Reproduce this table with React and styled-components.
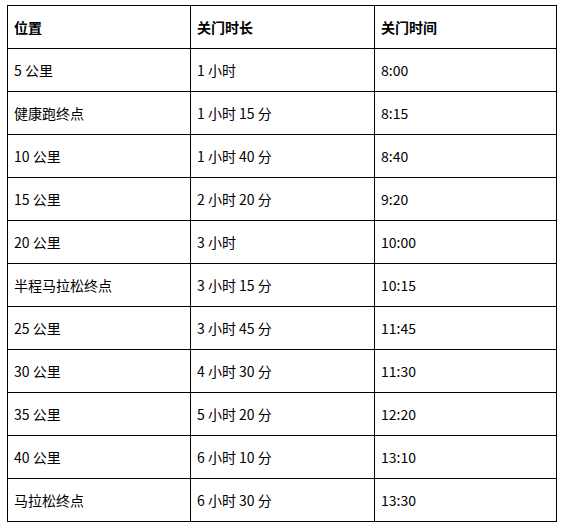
import React from "react";
import styled, { createGlobalStyle } from "styled-components";

const Global = createGlobalStyle`
  html, body { margin: 0; padding: 0; background: #fff; }
  body { font-family: "Noto Sans CJK SC", "Noto Sans", sans-serif; color: #000; }
`;

const Wrap = styled.div`
  padding: 5px 0 0 7px;
`;

const Table = styled.table`
  border-collapse: collapse;
  table-layout: fixed;
  width: 549px;
`;

const Cell = styled.td`
  border: 1px solid #000;
  height: 43px;
  padding: 0 0 0 6px;
  box-sizing: border-box;
  font-size: 14px;
  line-height: 16px;
  font-weight: ${(p) => (p.$head ? 700 : 400)};
  vertical-align: middle;
  white-space: nowrap;
`;

const rows = [
  ["5 公里", "1 小时", "8:00"],
  ["健康跑终点", "1 小时 15 分", "8:15"],
  ["10 公里", "1 小时 40 分", "8:40"],
  ["15 公里", "2 小时 20 分", "9:20"],
  ["20 公里", "3 小时", "10:00"],
  ["半程马拉松终点", "3 小时 15 分", "10:15"],
  ["25 公里", "3 小时 45 分", "11:45"],
  ["30 公里", "4 小时 30 分", "11:30"],
  ["35 公里", "5 小时 20 分", "12:20"],
  ["40 公里", "6 小时 10 分", "13:10"],
  ["马拉松终点", "6 小时 30 分", "13:30"],
];

export default function App() {
  return (
    <Wrap>
      <Global />
      <Table>
        <colgroup>
          <col style={{ width: 183 }} />
          <col style={{ width: 184 }} />
          <col style={{ width: 182 }} />
        </colgroup>
        <tbody>
          <tr>
            <Cell $head>位置</Cell>
            <Cell $head>关门时长</Cell>
            <Cell $head>关门时间</Cell>
          </tr>
          {rows.map((r) => (
            <tr key={r[0]}>
              {r.map((c, i) => (
                <Cell key={i}>{c}</Cell>
              ))}
            </tr>
          ))}
        </tbody>
      </Table>
    </Wrap>
  );
}
